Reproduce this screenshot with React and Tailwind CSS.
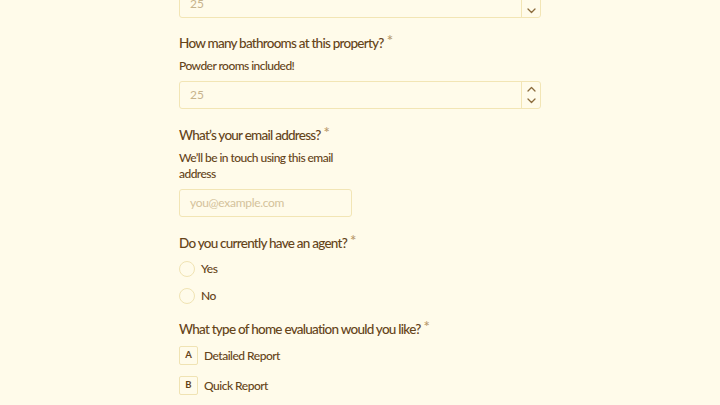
import React from "react";

const font = { fontFamily: "Lato, 'Open Sans', sans-serif" };

function Label({ children }) {
  return (
    <div className="flex items-start text-[13.5px] leading-[20px] font-medium tracking-[-0.75px] text-[#654419]">
      <span>{children}</span>
      <span className="ml-[3px] text-[15px] leading-[14px] tracking-normal text-[#b99a6c]">*</span>
    </div>
  );
}

function Chevron({ up }) {
  return (
    <svg width="9" height="6" viewBox="0 0 9 6" fill="none">
      <path
        d={up ? "M1 5 L4.5 1.5 L8 5" : "M1 1 L4.5 4.5 L8 1"}
        stroke="#8a6a3c"
        strokeWidth="1.3"
        strokeLinecap="round"
        strokeLinejoin="round"
      />
    </svg>
  );
}

function NumberBox({ className = "" }) {
  return (
    <div className={"flex w-[362px] h-[28px] border border-[#f2e5b5] rounded-[3px] bg-[#fffbea] " + className}>
      <div className="flex-1 flex items-center pl-[10px] text-[12px] text-[#c7b38c]">25</div>
      <div className="w-[19px] border-l border-[#f2e5b5] flex flex-col items-center justify-center gap-[6px]">
        <Chevron up />
        <Chevron />
      </div>
    </div>
  );
}

function Radio({ label }) {
  return (
    <div className="flex items-center gap-[6px] h-[17px]">
      <div className="w-[16px] h-[16px] rounded-full border border-[#f0e3b3] bg-[#fffbea]" />
      <span className="text-[12px] tracking-[-0.4px] font-medium text-[#654419]">{label}</span>
    </div>
  );
}

function Choice({ letter, label }) {
  return (
    <div className="flex items-center gap-[6px]">
      <div className="w-[19px] h-[19px] border border-[#f0e3b3] rounded-[2px] flex items-center justify-center text-[9.5px] font-bold text-[#654419]">
        {letter}
      </div>
      <span className="text-[12px] tracking-[-0.5px] font-medium text-[#654419]">{label}</span>
    </div>
  );
}

export default function App() {
  return (
    <div className="w-[720px] h-[405px] overflow-hidden bg-[#fffbea]" style={font}>
      <div className="ml-[179px] flex flex-col">
        <div className="mt-[-10px] flex w-[362px] h-[28px] border border-[#f2e5b5] rounded-[3px]">
          <div className="flex-1 flex items-center pl-[10px] text-[12px] text-[#c7b38c]">25</div>
          <div className="w-[19px] border-l border-[#f2e5b5] flex flex-col items-center justify-end pb-[3px]">
            <Chevron />
          </div>
        </div>

        <div className="mt-[15px]">
          <Label>How many bathrooms at this property?</Label>
        </div>
        <div className="mt-[4px] text-[12px] leading-[17px] font-medium tracking-[-0.55px] text-[#654419]">Powder rooms included!</div>
        <NumberBox className="mt-[7px]" />

        <div className="mt-[16px]">
          <Label>What’s your email address?</Label>
        </div>
        <div className="mt-[5px] w-[165px] text-[12px] leading-[16px] font-medium tracking-[-0.55px] text-[#654419]">
          We’ll be in touch using this email address
        </div>
        <div className="mt-[7px] w-[173px] h-[28px] border border-[#f2e5b5] rounded-[3px] flex items-center pl-[10px] text-[12px] tracking-[-0.3px] text-[#d4c29b]">
          you@example.com
        </div>

        <div className="mt-[16px]">
          <Label>Do you currently have an agent?</Label>
        </div>
        <div className="mt-[7px] flex flex-col gap-[10px]">
          <Radio label="Yes" />
          <Radio label="No" />
        </div>

        <div className="mt-[15px]">
          <Label>What type of home evaluation would you like?</Label>
        </div>
        <div className="mt-[7px] flex flex-col gap-[11px]">
          <Choice letter="A" label="Detailed Report" />
          <Choice letter="B" label="Quick Report" />
        </div>
      </div>
    </div>
  );
}
